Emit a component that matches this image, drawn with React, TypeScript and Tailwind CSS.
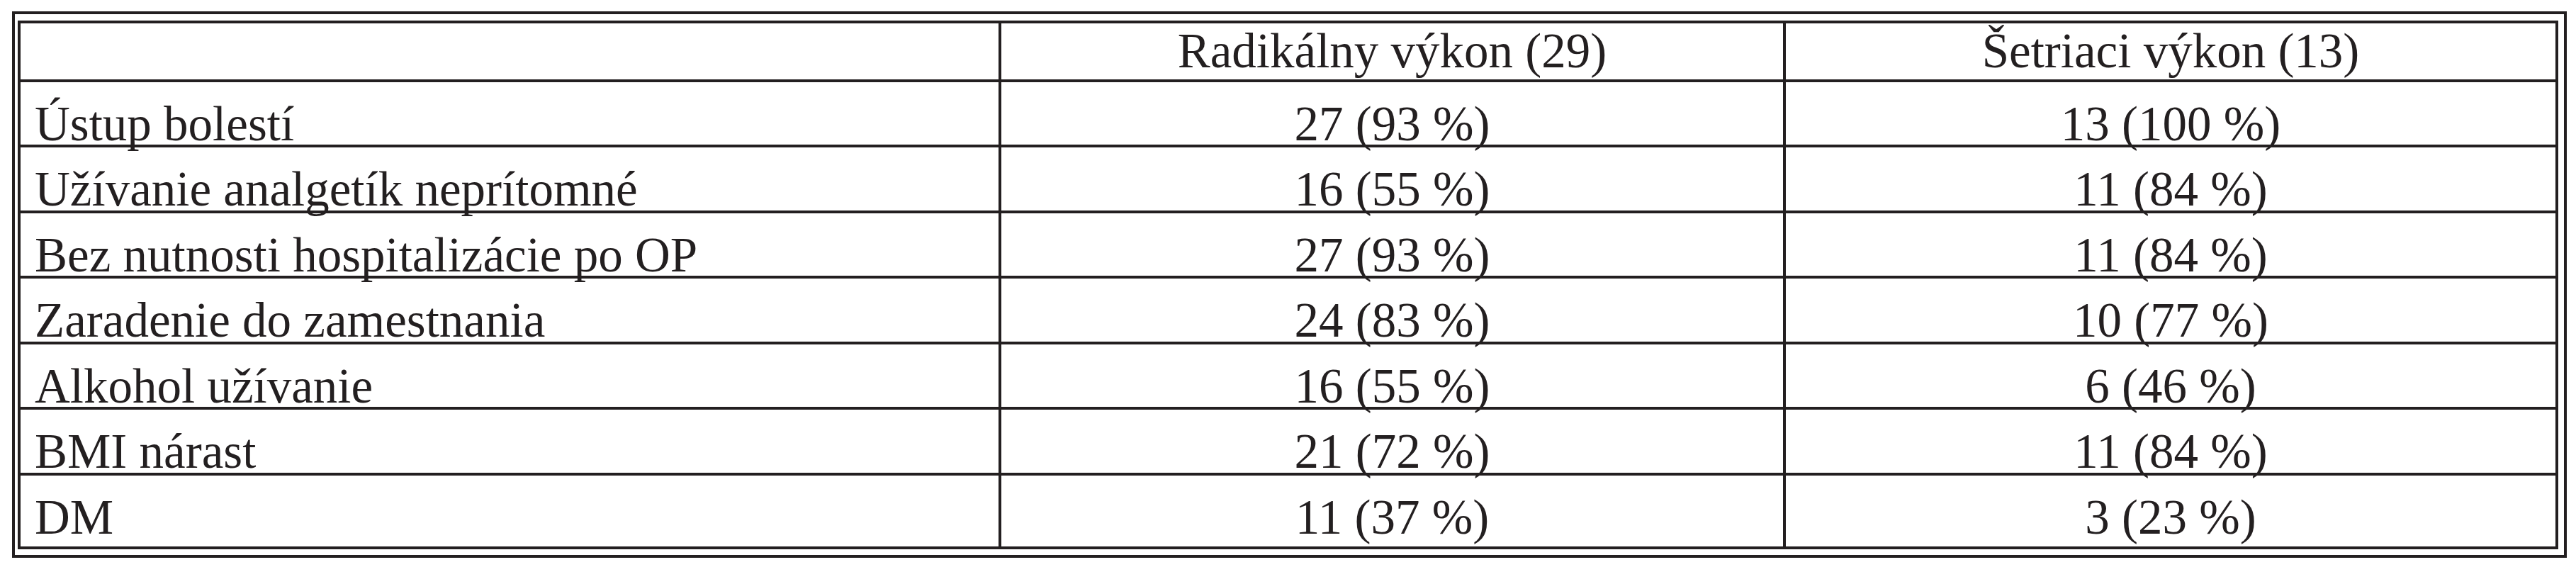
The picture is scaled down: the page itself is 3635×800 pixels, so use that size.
import { Fragment } from 'react';

const rows: [string, string, string][] = [
  ['Ústup bolestí', '27 (93 %)', '13 (100 %)'],
  ['Užívanie analgetík neprítomné', '16 (55 %)', '11 (84 %)'],
  ['Bez nutnosti hospitalizácie po OP', '27 (93 %)', '11 (84 %)'],
  ['Zaradenie do zamestnania', '24 (83 %)', '10 (77 %)'],
  ['Alkohol užívanie', '16 (55 %)', '6 (46 %)'],
  ['BMI nárast', '21 (72 %)', '11 (84 %)'],
  ['DM', '11 (37 %)', '3 (23 %)'],
];

export default function App() {
  return (
    <div className="min-h-[800px] bg-white pl-[17px] pt-[16px] font-['Liberation_Serif','Times_New_Roman',serif] text-[69px] leading-normal text-[#231f20]">
      <div className="w-[3605px] border-4 border-[#231f20] pb-2 pl-1 pr-2 pt-[9px]">
        <div className="grid grid-cols-[1384px_1107px_1090px] grid-rows-[83px_92px_93px_92px_93px_92px_93px_104px] border-l-4 border-t-4 border-[#231f20]">
          <div className="border-b-4 border-r-4 border-[#231f20]" />
          <div className="flex items-center justify-center border-b-4 border-r-4 border-[#231f20]">
            Radikálny výkon (29)
          </div>
          <div className="flex items-center justify-center border-b-4 border-r-4 border-[#231f20]">
            Šetriaci výkon (13)
          </div>
          {rows.map(([label, a, b]) => (
            <Fragment key={label}>
              <div className="border-b-4 border-r-4 border-[#231f20] pl-5 pt-2">{label}</div>
              <div className="border-b-4 border-r-4 border-[#231f20] pt-2 text-center">{a}</div>
              <div className="border-b-4 border-r-4 border-[#231f20] pt-2 text-center">{b}</div>
            </Fragment>
          ))}
        </div>
      </div>
    </div>
  );
}
